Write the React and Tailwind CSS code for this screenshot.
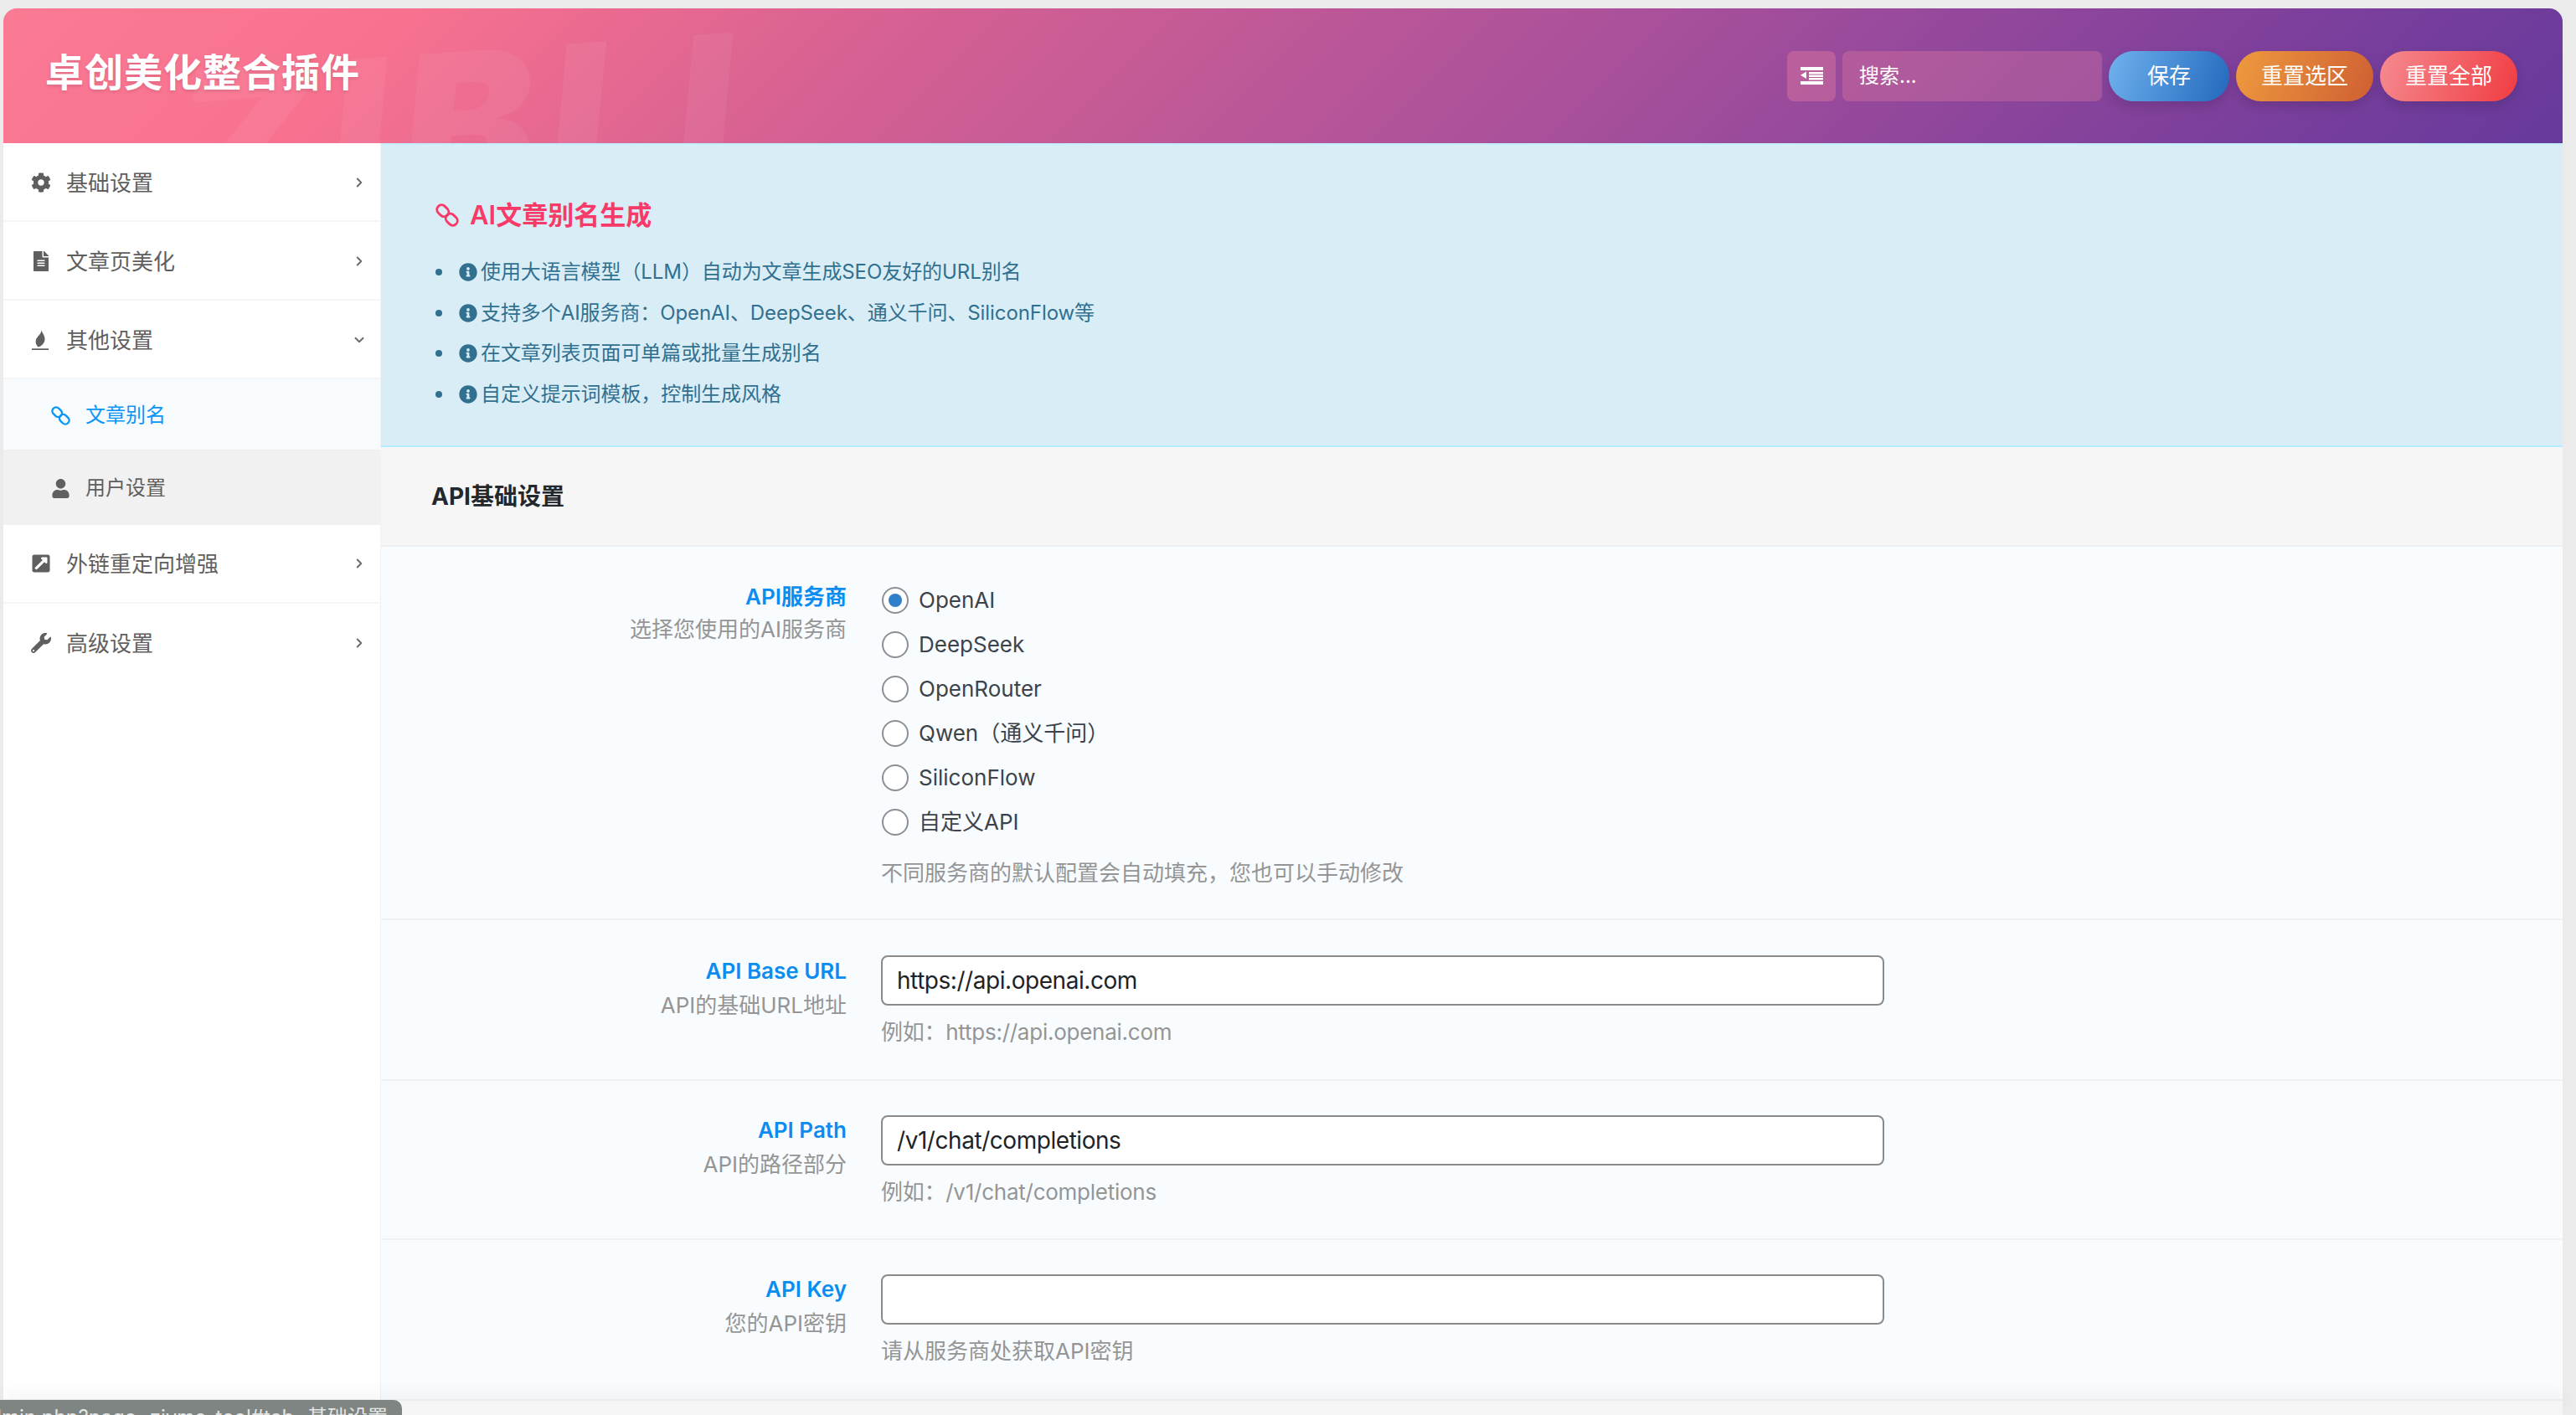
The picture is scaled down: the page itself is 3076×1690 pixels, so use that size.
import React from "react";
import { FaCog, FaFileAlt, FaUser, FaExternalLinkSquareAlt, FaWrench, FaInfoCircle } from "react-icons/fa";
import { ChevronRight, ChevronDown } from "lucide-react";

const FONT = "font-['Inter','Noto_Sans_CJK_SC',sans-serif]";

function MainItem({ icon: Icon, label, open, last, flush }) {
  const Arrow = open ? ChevronDown : ChevronRight;
  return (
    <div className={(last ? "" : "border-b-2 border-[#f5f5f5] ") + (flush ? "" : "pt-[2px] ") + "flex h-[94px] shrink-0 items-center bg-white pl-[33px] pr-[16px] text-[26px] text-[#5f5f5f]"}>
      <span className="flex w-[42px] shrink-0 items-center"><Icon className="h-[24px] w-[24px]" /></span>
      <span className="flex-1">{label}</span>
      <Arrow className="h-[18px] w-[18px] text-[#6b6b6b]" strokeWidth={2.6} />
    </div>
  );
}

function SubItem({ icon: Icon, label, active }) {
  return (
    <div className={active
      ? "flex h-[86px] shrink-0 items-center border-b-2 border-[#f0f0f0] bg-[#f8fbfe] pl-[57px] pt-[2px] text-[24px] text-[#0a96f5]"
      : "flex h-[88px] shrink-0 items-center bg-[#f1f1f1] pl-[57px] text-[24px] text-[#5f5f5f]"}>
      <span className="flex w-[41px] shrink-0 items-center"><Icon className="h-[23px] w-[23px]" /></span>
      <span>{label}</span>
    </div>
  );
}

function Flame(props) {
  return (
    <svg viewBox="0 0 24 24" fill="currentColor" {...props}>
      <path d="M12.500 0C13 3.500 16.500 6 16.500 11C16.500 15.500 13 19.500 8.500 20.500C6.500 18.500 5 15.500 5.800 12.300C7 7.500 12.500 5.500 12.500 0Z" />
      <rect x="1" y="22.300" width="20" height="1.700" />
    </svg>
  );
}

function LinkIcon(props) {
  return (
    <svg viewBox="0 0 24 24" fill="none" stroke="currentColor" strokeWidth="2.500" {...props}>
      <rect x="1" y="2.750" width="13" height="9.500" rx="4.700" transform="rotate(45 7.500 7.500)" />
      <rect x="10" y="11.750" width="13" height="9.500" rx="4.700" transform="rotate(45 16.500 16.500)" />
    </svg>
  );
}

function OutdentIcon(props) {
  return (
    <svg viewBox="0 0 27 21" fill="currentColor" {...props}>
      <rect x="0" y="0" width="27" height="4" />
      <rect x="10" y="6" width="17" height="2.500" />
      <rect x="10" y="9.500" width="17" height="2.500" />
      <rect x="10" y="13" width="17" height="2.500" />
      <rect x="0" y="17" width="27" height="4" />
      <polygon points="0,9.750 7,5.500 7,14" />
    </svg>
  );
}

function Radio({ label, checked }) {
  return (
    <div className="flex h-[53px] items-center gap-[12px] pl-[1px] text-[26px] text-[#3c434a]">
      <span className={checked
        ? "flex h-[32px] w-[32px] items-center justify-center rounded-full border-2 border-[#8c8f94] bg-white"
        : "h-[32px] w-[32px] rounded-full border-2 border-[#8c8f94] bg-white"}>
        {checked && <span className="h-[16px] w-[16px] rounded-full bg-[#2f7fcb]" />}
      </span>
      <span>{label}</span>
    </div>
  );
}

function Row({ title, sub, value, hint, first, last }) {
  return (
    <div className={first
      ? "flex h-[192px] shrink-0 border-b-2 border-[#eef2f5] bg-[#f8fcff]"
      : last
        ? "flex h-[190px] shrink-0 bg-[#f8fcff]"
        : "flex h-[190px] shrink-0 border-b-2 border-[#eef2f5] bg-[#f8fcff]"}>
      <div className={first ? "w-[556px] shrink-0 pt-[42px] text-right" : "w-[556px] shrink-0 pt-[40px] text-right"}>
        <div className="text-[26px] font-semibold leading-[38px] text-[#0a8cf0]">{title}</div>
        <div className="mt-[3px] text-[26px] leading-[38px] text-[#959595]">{sub}</div>
      </div>
      <div className={first ? "ml-[41px] pt-[42px]" : "ml-[41px] pt-[41px]"}>
        <div className="flex h-[60px] w-[1198px] items-center rounded-[8px] border-2 border-[#8a8a8a] bg-white px-[17px] text-[28px] tracking-[-0.45px] text-[#1d2327]">{value}</div>
        <div className={value
          ? "mt-[13px] text-[26px] leading-[38px] tracking-[-0.25px] text-[#959595]"
          : "mt-[13px] text-[26px] leading-[38px] text-[#959595]"}>{hint}</div>
      </div>
    </div>
  );
}

export default function App() {
  return (
    <div className={`${FONT} relative flex h-[1690px] w-[3076px] flex-col overflow-hidden bg-[#ebebeb] pl-[4px] pr-[16px] pt-[10px]`}>
      <header className="relative flex h-[161px] shrink-0 items-center justify-between overflow-hidden rounded-t-[16px] bg-[linear-gradient(135deg,#fb7a94_0%,#f8728f_15%,#d96292_32%,#a8509b_62%,#7f409c_85%,#663a9c_100%)] pl-[50px] pr-[54px]">
        <div className="pointer-events-none absolute left-[205px] top-[7px] rotate-[-4deg] text-[240px] font-black italic leading-[260px] tracking-[16px] text-white/[0.055]">ZIBLL</div>
        <h1 className="relative pb-[8px] text-[46px] font-bold tracking-[1px] text-white [text-shadow:0_2px_4px_rgba(0,0,0,0.12)]">卓创美化整合插件</h1>
        <div className="relative flex items-center gap-[8px] text-[26px] text-white">
          <div className="flex h-[60px] w-[58px] items-center justify-center rounded-[8px] bg-[#ff8fa0]/30"><OutdentIcon className="h-[21px] w-[27px]" /></div>
          <div className="flex h-[60px] w-[310px] items-center rounded-[8px] bg-[#ff8fa0]/25 px-[20px] text-[24px]">搜索...</div>
          <button className="h-[60px] w-[144px] rounded-[30px] bg-[linear-gradient(110deg,#6fb2ee,#2369bd)] shadow-[0_6px_14px_rgba(0,0,0,0.14)]">保存</button>
          <button className="h-[60px] w-[164px] rounded-[30px] bg-[linear-gradient(110deg,#ee9a3e,#cf5f33)] shadow-[0_6px_14px_rgba(0,0,0,0.14)]">重置选区</button>
          <button className="h-[60px] w-[164px] rounded-[30px] bg-[linear-gradient(110deg,#f58b90,#f03c42)] shadow-[0_6px_14px_rgba(0,0,0,0.14)]">重置全部</button>
        </div>
      </header>
      <div className="flex min-h-0 flex-1">
        <aside className="flex w-[451px] shrink-0 flex-col border-r border-[#f2f2f2] bg-white">
          <MainItem icon={FaCog} label="基础设置" />
          <MainItem icon={FaFileAlt} label="文章页美化" />
          <MainItem icon={Flame} label="其他设置" open />
          <SubItem icon={LinkIcon} label="文章别名" active />
          <SubItem icon={FaUser} label="用户设置" />
          <MainItem icon={FaExternalLinkSquareAlt} label="外链重定向增强" flush />
          <MainItem icon={FaWrench} label="高级设置" last flush />
        </aside>
        <main className="min-w-0 flex-1">
          <section className="h-[363px] border-y-2 border-t-[#c3eefb] border-b-[#b5ecff] bg-[#d9edf7] pl-[65px] pt-[62px] text-[#31708f]">
            <div className="flex h-[44px] items-center gap-[13px] text-[31px] font-semibold text-[#f83a68]">
              <LinkIcon className="h-[28px] w-[28px]" />
              <span>AI文章别名生成</span>
            </div>
            <ul className="mt-[22px] text-[24px] tracking-[-0.08px]">
              {["使用大语言模型（LLM）自动为文章生成SEO友好的URL别名", "支持多个AI服务商：OpenAI、DeepSeek、通义千问、SiliconFlow等", "在文章列表页面可单篇或批量生成别名", "自定义提示词模板，控制生成风格"].map((t) => (
                <li key={t} className="flex h-[48.500px] items-center">
                  <span className="mr-[20px] h-[8px] w-[8px] rounded-full bg-[#31708f]" />
                  <FaInfoCircle className="mr-[4px] h-[22px] w-[22px]" />
                  <span>{t}</span>
                </li>
              ))}
            </ul>
          </section>
          <div className="flex h-[119px] items-center border-b-2 border-[#efefef] bg-[#f6f6f6] pl-[60px] text-[28px] font-bold text-[#23282d]">API基础设置</div>
          <div className="flex h-[446px] border-b-2 border-[#eef2f5] bg-[#f8fcff]">
            <div className="w-[556px] shrink-0 pt-[41px] text-right">
              <div className="text-[26px] font-semibold leading-[38px] text-[#0a8cf0]">API服务商</div>
              <div className="mt-[1px] text-[26px] leading-[38px] text-[#959595]">选择您使用的AI服务商</div>
            </div>
            <div className="ml-[41px] pt-[37px]">
              <Radio label="OpenAI" checked />
              <Radio label="DeepSeek" />
              <Radio label="OpenRouter" />
              <Radio label="Qwen（通义千问）" />
              <Radio label="SiliconFlow" />
              <Radio label="自定义API" />
              <div className="mt-[16px] text-[26px] leading-[38px] text-[#959595]">不同服务商的默认配置会自动填充，您也可以手动修改</div>
            </div>
          </div>
          <Row first title="API Base URL" sub="API的基础URL地址" value="https://api.openai.com" hint="例如：https://api.openai.com" />
          <Row title="API Path" sub="API的路径部分" value="/v1/chat/completions" hint="例如：/v1/chat/completions" />
          <Row last title="API Key" sub="您的API密钥" value="" hint="请从服务商处获取API密钥" />
        </main>
      </div>
      <footer className="relative h-[19px] shrink-0 border-t-2 border-[#e9edf0] bg-[#f5f5f5] shadow-[0_-10px_16px_rgba(0,0,0,0.035)]" />
      <div className="absolute bottom-0 left-0 flex h-[18px] w-[480px] items-start justify-end overflow-hidden whitespace-nowrap rounded-tr-[10px] bg-[#7f8582] pr-[17px] text-[24px] leading-[42px] text-[#e4e6e5]">
        /wp-admin/admin.php?page=zivmo_tool#tab=基础设置
      </div>
    </div>
  );
}
